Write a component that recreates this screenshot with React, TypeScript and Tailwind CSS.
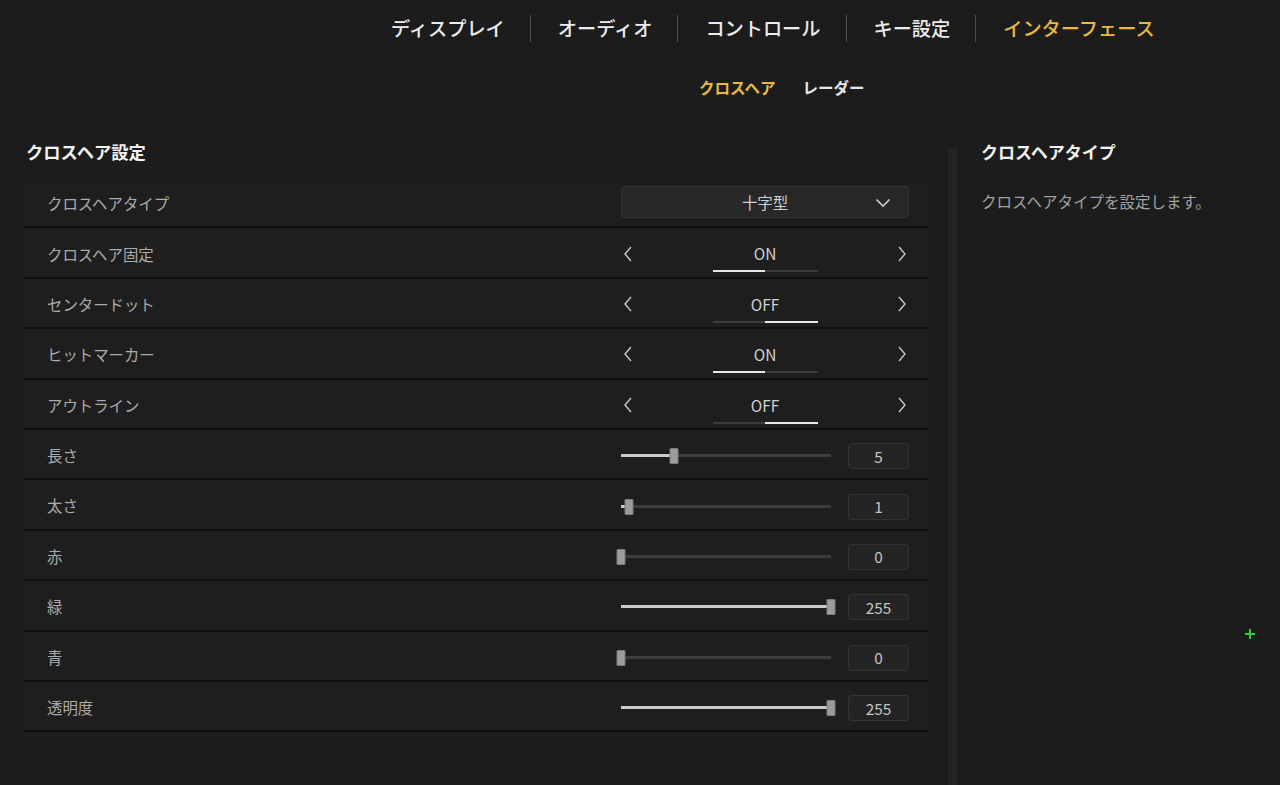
import React from 'react';

// ==================== Data ====================
type Row =
  | { label: string; kind: 'select'; value: string }
  | { label: string; kind: 'toggle'; on: boolean }
  | { label: string; kind: 'slider'; value: number; pct: number };

const rows: Row[] = [
  { label: 'クロスヘアタイプ', kind: 'select', value: '十字型' },
  { label: 'クロスヘア固定', kind: 'toggle', on: true },
  { label: 'センタードット', kind: 'toggle', on: false },
  { label: 'ヒットマーカー', kind: 'toggle', on: true },
  { label: 'アウトライン', kind: 'toggle', on: false },
  { label: '長さ', kind: 'slider', value: 5, pct: 25 },
  { label: '太さ', kind: 'slider', value: 1, pct: 4 },
  { label: '赤', kind: 'slider', value: 0, pct: 0 },
  { label: '緑', kind: 'slider', value: 255, pct: 100 },
  { label: '青', kind: 'slider', value: 0, pct: 0 },
  { label: '透明度', kind: 'slider', value: 255, pct: 100 },
];

const tabs = ['ディスプレイ', 'オーディオ', 'コントロール', 'キー設定', 'インターフェース'];

// ==================== Icons ====================
const Chevron: React.FC<{ dir: 'left' | 'right' | 'down' }> = ({ dir }) => {
  if (dir === 'down') {
    return (
      <svg width="16" height="10" viewBox="0 0 16 10" fill="none">
        <path d="M1.5 1.5 L8 8 L14.5 1.5" stroke="#d0d0d0" strokeWidth="1.6" />
      </svg>
    );
  }
  return (
    <svg width="10" height="16" viewBox="0 0 10 16" fill="none">
      <path d={dir === 'left' ? 'M8 1 L2 8 L8 15' : 'M2 1 L8 8 L2 15'} stroke="#c8c8c8" strokeWidth="1.4" />
    </svg>
  );
};

// ==================== Controls ====================
const SelectControl: React.FC<{ value: string }> = ({ value }) => (
  <div className="relative flex h-[32px] w-full items-center justify-center rounded-[3px] border border-[#333333] bg-[#282828]">
    <span className="text-[15.4px] text-[#cfcfcf]">{value}</span>
    <div className="absolute right-[17px] top-[11px]">
      <Chevron dir="down" />
    </div>
  </div>
);

const ToggleControl: React.FC<{ on: boolean }> = ({ on }) => (
  <div className="flex h-full w-full items-start justify-between">
    <div className="flex h-full items-center pl-[2px] pt-[2px]">
      <Chevron dir="left" />
    </div>
    <div className="flex h-full flex-col items-center pt-[15px]">
      <span className="text-[15.4px] leading-[20px] text-[#d2d2d2]">{on ? 'ON' : 'OFF'}</span>
      <div className="mt-[7px] flex h-[2px] w-[105px]">
        <div className={on ? 'flex-1 bg-[#e6e6e6]' : 'flex-1 bg-[#3c3c3c]'} />
        <div className={on ? 'flex-1 bg-[#3c3c3c]' : 'flex-1 bg-[#e6e6e6]'} />
      </div>
    </div>
    <div className="flex h-full items-center pr-[2px] pt-[2px]">
      <Chevron dir="right" />
    </div>
  </div>
);

const SliderControl: React.FC<{ value: number; pct: number }> = ({ value, pct }) => (
  <div className="flex w-full items-center justify-between pt-[4px]">
    <div className="relative h-[16px] w-[210px]">
      <div className="absolute left-0 right-0 top-[6px] h-[3px] bg-[#3d3d3d]" />
      <div className="absolute left-0 top-[6px] h-[3px] bg-[#c9c9c9]" style={{ width: `${pct}%` }} />
      <div
        className="absolute top-0 h-[16px] w-[9px] -translate-x-1/2 rounded-[1px] border border-[#7a7a7a] bg-[#9c9c9c]"
        style={{ left: `${pct}%` }}
      />
    </div>
    <div className="flex h-[26px] w-[61px] items-center justify-center rounded-[3px] border border-[#333333] bg-[#242424]">
      <span className="text-[15.4px] text-[#c4c4c4]">{value}</span>
    </div>
  </div>
);

// ==================== App ====================
export default function App() {
  return (
    <div
      className="relative flex h-[785px] w-[1280px] flex-col overflow-hidden bg-[#1c1c1c]"
      style={{ fontFamily: '"Noto Sans CJK JP", "Noto Sans", sans-serif' }}
    >
      {/* Main tabs */}
      <nav className="flex h-[56px] items-center pl-[391px]">
        {tabs.map((t, i) => (
          <React.Fragment key={t}>
            {i > 0 && <div className="ml-[25px] mr-[27px] h-[27px] w-px bg-[#4e4e4e]" />}
            <span
              className={`text-[19.2px] font-medium ${
                i === tabs.length - 1 ? 'text-[#e8b844]' : 'text-[#ececec]'
              }`}
            >
              {t}
            </span>
          </React.Fragment>
        ))}
      </nav>

      {/* Sub tabs */}
      <div className="mt-[16px] flex h-[32px] items-center gap-[27px] pl-[699px]">
        <span className="text-[15.5px] font-bold text-[#e8b844]">クロスヘア</span>
        <span className="text-[15.5px] font-bold text-[#e6e6e6]">レーダー</span>
      </div>

      <div className="mt-[36px] flex flex-1">
        {/* Settings list */}
        <div className="w-[929px] pl-[24px]">
          <h2 className="h-[24px] pl-[2px] text-[17.3px] font-bold leading-[24px] text-[#f2f2f2]">クロスヘア設定</h2>
          <div className="mt-[14px]">
            {rows.map((r) => (
              <div
                key={r.label}
                className="flex h-[50.4px] items-center border-b-2 border-[#0f0f0f] bg-[#1e1e1e]"
              >
                <span className="flex-1 pl-[23px] pt-[3px] text-[15.4px] text-[#ababab]">{r.label}</span>
                <div className="mr-[20px] flex h-full w-[288px] items-center">
                  {r.kind === 'select' && <SelectControl value={r.value} />}
                  {r.kind === 'toggle' && <ToggleControl on={r.on} />}
                  {r.kind === 'slider' && <SliderControl value={r.value} pct={r.pct} />}
                </div>
              </div>
            ))}
          </div>
        </div>

        {/* Scrollbar */}
        <div className="ml-[19px] mt-[7px] w-[9px] bg-[#242424]" />

        {/* Description */}
        <div className="ml-[24px] flex-1">
          <h3 className="h-[24px] text-[17px] font-bold leading-[24px] text-[#f2f2f2]">クロスヘアタイプ</h3>
          <p className="mt-[25px] text-[15.5px] leading-[24px] text-[#a2a2a2]">クロスヘアタイプを設定します。</p>
        </div>
      </div>

      {/* Crosshair preview */}
      <div className="absolute left-[1245px] top-[629px] h-[10px] w-[10px]">
        <div className="absolute left-0 top-[4px] h-[2px] w-[10px] bg-[#2fd12f]" />
        <div className="absolute left-[4px] top-0 h-[10px] w-[2px] bg-[#2fd12f]" />
      </div>
    </div>
  );
}
